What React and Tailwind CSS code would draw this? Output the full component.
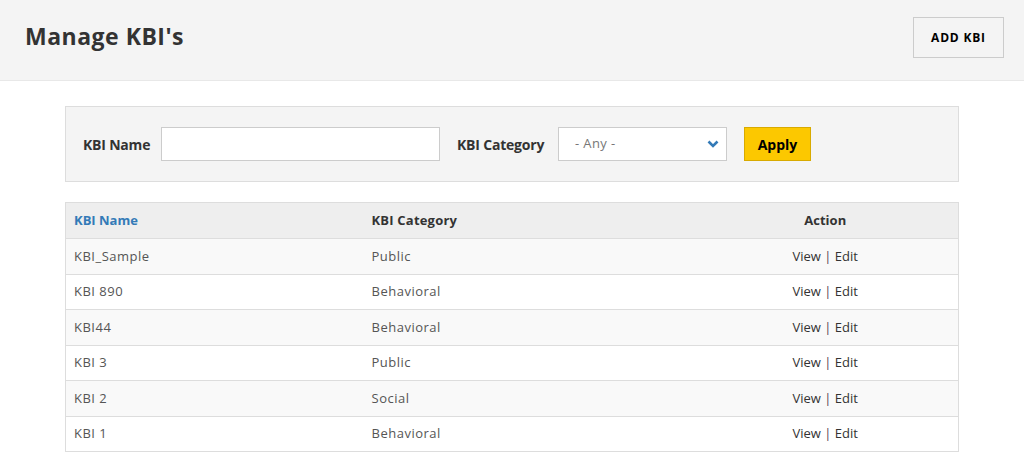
import React from "react";

const rows = [
  { name: "KBI_Sample", category: "Public" },
  { name: "KBI 890", category: "Behavioral" },
  { name: "KBI44", category: "Behavioral" },
  { name: "KBI 3", category: "Public" },
  { name: "KBI 2", category: "Social" },
  { name: "KBI 1", category: "Behavioral" },
];

const App = () => {
  return (
    <div className="min-h-screen bg-white font-['Open_Sans',sans-serif] text-[#333]">
      {/* Page header */}
      <div className="h-[81px] bg-[#f4f4f4] border-b border-[#e8e8e8] flex items-start justify-between pl-[25px] pr-[20px]">
        <h1 className="mt-[19px] text-[23px] font-bold text-[#333] tracking-[0.5px]">
          Manage KBI's
        </h1>
        <button className="mt-[17px] w-[91px] h-[41px] border border-[#cccccc] bg-[#f4f4f4] text-[12px] font-bold text-black tracking-[0.8px]">
          ADD KBI
        </button>
      </div>

      <div className="mx-[65px] mt-[25px]">
        {/* Filters */}
        <div className="h-[76px] bg-[#f4f4f4] border border-[#dddddd] flex items-center pl-[17px]">
          <label className="w-[78px] text-[14px] font-bold text-[#333] tracking-[-0.2px]">KBI Name</label>
          <input
            type="text"
            className="w-[279px] h-[34px] bg-white border border-[#cccccc] outline-none px-2 text-[13px]"
          />
          <label className="ml-[17px] w-[101px] text-[14px] font-bold text-[#333] tracking-[-0.2px]">KBI Category</label>
          <div className="relative w-[169px] h-[34px] bg-white border border-[#cccccc] flex items-center pl-[16px] text-[13px] text-[#777] tracking-[0.4px]">
            - Any -
            <svg
              className="absolute right-[7px] top-[12px]"
              width="12"
              height="9"
              viewBox="0 0 12 9"
            >
              <path d="M1.5 1.5 L6 6 L10.5 1.5" fill="none" stroke="#337ab7" strokeWidth="2.6" />
            </svg>
          </div>
          <button className="ml-[17px] w-[67px] h-[34px] bg-[#fcc800] border border-[#d8aa00] text-[14px] font-bold text-black">
            Apply
          </button>
        </div>

        {/* Table */}
        <table className="mt-[20px] w-full border-collapse border border-[#dddddd] table-fixed">
          <thead>
            <tr className="bg-[#eeeeee] h-[36px]">
              <th className="w-[299px] text-left pl-[8px] text-[13px] font-bold text-[#337ab7] border-b border-[#dddddd]">
                KBI Name
              </th>
              <th className="w-[328px] text-left pl-[7px] text-[13px] font-bold text-[#333] border-b border-[#dddddd] tracking-[0.2px]">
                KBI Category
              </th>
              <th className="text-center text-[13px] font-bold text-[#333] border-b border-[#dddddd]">
                Action
              </th>
            </tr>
          </thead>
          <tbody>
            {rows.map((r, i) => (
              <tr
                key={r.name}
                className={`h-[35.5px] border-t border-[#dddddd] ${i % 2 === 0 ? "bg-[#f9f9f9]" : "bg-white"}`}
              >
                <td className="pl-[8px] text-[13px] text-[#555] tracking-[0.5px]">{r.name}</td>
                <td className="pl-[7px] text-[13px] text-[#555] tracking-[0.5px]">{r.category}</td>
                <td className="text-center text-[13px] text-[#333]">
                  View <span className="text-[#5a3e4e]">|</span> Edit
                </td>
              </tr>
            ))}
          </tbody>
        </table>
      </div>
    </div>
  );
};

export default App;
